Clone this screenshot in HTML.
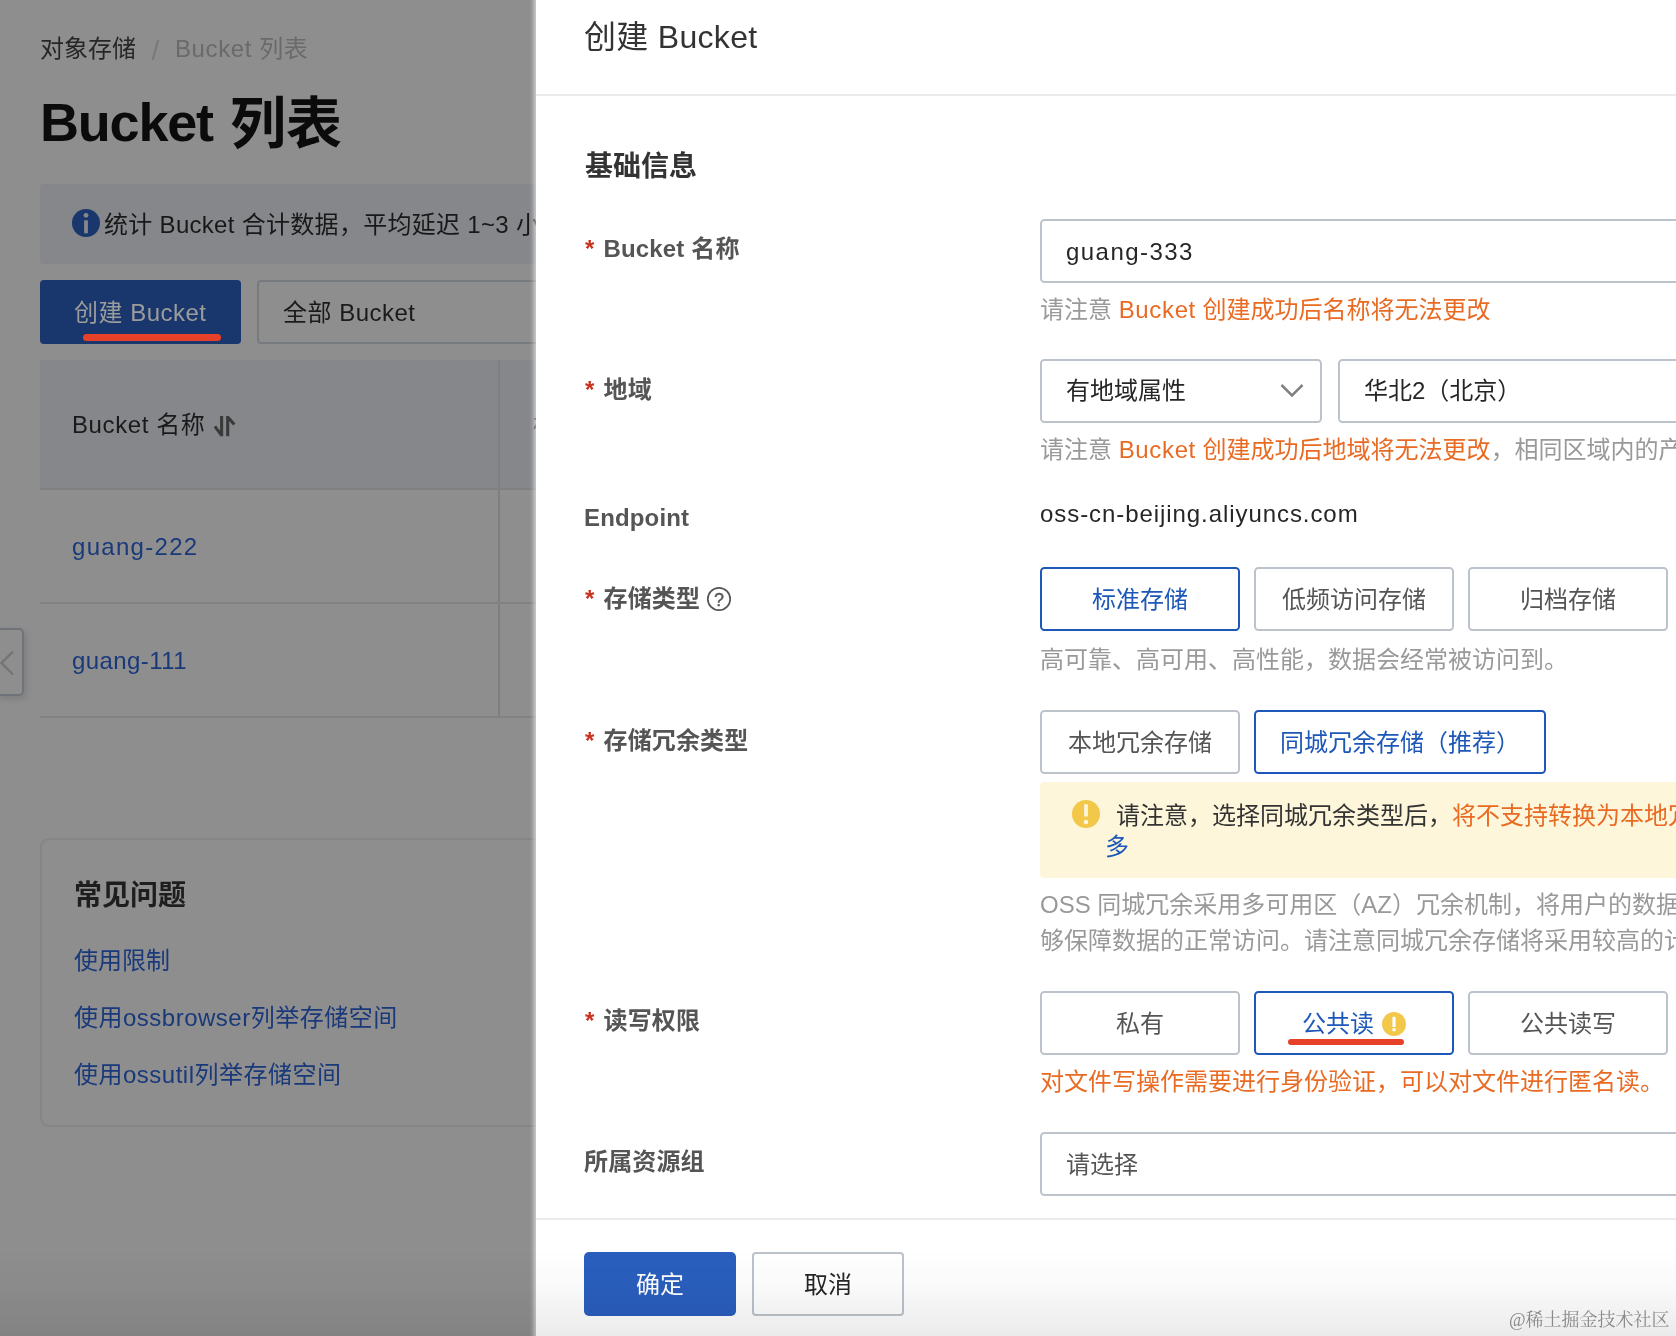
<!DOCTYPE html>
<html lang="zh-CN">
<head>
<meta charset="utf-8">
<title>创建 Bucket</title>
<style>
*{box-sizing:border-box;margin:0;padding:0}
html,body{width:1676px;height:1336px;overflow:hidden;background:#8e8e8e}
body{font-family:"Liberation Sans","Noto Sans CJK SC",sans-serif;font-size:24px;color:#1c1c1c;position:relative}
.abs{position:absolute;white-space:nowrap}
.t{position:absolute;white-space:nowrap;line-height:36px;height:36px}
/* left */
#left{position:absolute;left:0;top:0;width:536px;height:1336px;overflow:hidden;background:#8e8e8e}
#left .fade{position:absolute;left:0;top:1230px;width:536px;height:106px;background:linear-gradient(to bottom,rgba(0,0,0,0),rgba(0,0,0,.08))}
.link{color:#19397a}
/* panel */
#panel{position:absolute;left:536px;top:0;width:1140px;height:1336px;background:#fff;overflow:hidden;}
.lbl{font-weight:bold;color:#555;letter-spacing:.15px}
.req{color:#c8321e;font-weight:bold;margin-right:9px}
.box{position:absolute;border:2px solid #bcc3ca;border-radius:4.5px;background:#fff;height:64px;line-height:61px;white-space:nowrap;color:#555}
.box.c{text-align:center}
.box.sel{border-color:#1d57b9;color:#1d57b9}
.help{color:#999}
.or{color:#e96b23}
#left,#panel{will-change:transform}
</style>
</head>
<body>
<div id="left">
  <div class="t" style="left:40px;top:31px;color:#262626">对象存储</div>
  <div class="t" style="left:151.5px;top:32.5px;color:#797979;font-size:28px">/</div>
  <div class="t" style="left:175px;top:31px;color:#6a6a6a;letter-spacing:.6px">Bucket 列表</div>
  <div class="abs" id="h1" style="left:40px;top:82px;font-size:56px;line-height:80px;font-weight:bold;color:#0b0b0b"><span style="font-size:54px;letter-spacing:-1.2px">Bucket</span><span style="display:inline-block;width:17px"></span><span style="position:relative;top:1.5px">列表</span></div>

  <div class="abs" style="left:40px;top:184px;width:520px;height:80px;background:#85878b;border-radius:4px"></div>
  <svg class="abs" style="left:72px;top:209.4px" width="28" height="28" viewBox="0 0 28 28"><circle cx="14" cy="14" r="14" fill="#19376d"/><circle cx="14" cy="6.3" r="2.4" fill="#85878b"/><rect x="12.1" y="11.3" width="3.8" height="13" fill="#85878b"/></svg>
  <div class="t" style="left:104px;top:207px;color:#181818;letter-spacing:.3px">统计 Bucket 合计数据，平均延迟 1~3 小时</div>

  <div class="abs" style="left:40px;top:280px;width:201px;height:64px;background:#19376d;border-radius:4px"></div>
  <div class="t" style="left:74px;top:295px;color:#9c9c9c;letter-spacing:.5px">创建 Bucket</div>
  <div class="abs" style="left:83px;top:334px;width:138px;height:7px;border-radius:4px;background:#e8412a"></div>

  <div class="abs" style="left:257px;top:280px;width:400px;height:64px;border:2px solid #777b80;border-radius:4px"></div>
  <div class="t" style="left:283px;top:295px;color:#1a1a1a;letter-spacing:.5px">全部 Bucket</div>

  <div class="abs" style="left:40px;top:360px;width:520px;height:129px;background:#85878b"></div>
  <div class="abs" style="left:498px;top:360px;width:2px;height:358px;background:#7e7e7f"></div>
  <div class="abs" style="left:40px;top:488px;width:520px;height:2px;background:#808081"></div>
  <div class="abs" style="left:40px;top:602px;width:520px;height:2px;background:#818181"></div>
  <div class="abs" style="left:40px;top:716px;width:520px;height:2px;background:#818181"></div>
  <div class="t" style="left:72px;top:407px;color:#1a1a1a;letter-spacing:.6px">Bucket 名称</div>
  <svg class="abs" style="left:213px;top:414px" width="24" height="24" viewBox="0 0 24 24" fill="none" stroke="#3a3a3a" stroke-width="3.1"><path d="M8.6 2V22.2 M1.9 12.4L8.6 21.4"/><path d="M14.7 22.2V2 M14.7 3L21.3 10.6"/></svg>

  <div class="t" style="left:533px;top:407px;color:#1a1a1a">标签</div>
  <div class="t link" style="left:72px;top:529px;letter-spacing:1.3px">guang-222</div>
  <div class="t link" style="left:72px;top:643px;letter-spacing:.42px">guang-111</div>

  <div class="abs" style="left:-4px;top:628px;width:28px;height:68px;border:2px solid #6e7379;border-radius:5px;box-shadow:2px 3px 6px rgba(0,0,0,.12)"></div>
  <svg class="abs" style="left:0;top:648px" width="16" height="30" viewBox="0 0 16 30" fill="none" stroke="#747474" stroke-width="2.4"><path d="M13 3.5L1.5 15L13 26.5"/></svg>

  <div class="abs" style="left:40px;top:838px;width:560px;height:289px;border:2px solid #858585;border-radius:9px"></div>
  <div class="abs" style="left:74px;top:875px;font-size:28px;line-height:42px;font-weight:bold;color:#1e1e1e">常见问题</div>
  <div class="t link" style="left:74px;top:943px">使用限制</div>
  <div class="t link" style="left:74px;top:1000px;letter-spacing:.5px">使用ossbrowser列举存储空间</div>
  <div class="t link" style="left:74px;top:1057px;letter-spacing:.5px">使用ossutil列举存储空间</div>
  </div>

<div class="abs" style="left:529px;top:0;width:7px;height:1336px;z-index:5;background:linear-gradient(to right,rgba(255,255,255,0) 0,rgba(255,255,255,.07) 30%,rgba(255,255,255,.2) 55%,rgba(255,255,255,.38) 78%,rgba(255,255,255,.52) 100%)"></div>
<div id="panel">
  <div class="abs" style="left:48px;top:13px;font-size:32px;line-height:48px;color:#333;letter-spacing:.3px">创建 Bucket</div>
  <div class="abs" style="left:0;top:94px;width:1140px;height:2px;background:#ebebeb"></div>
  <div class="abs" style="left:49px;top:146px;font-size:28px;line-height:42px;font-weight:bold;color:#333">基础信息</div>
  <!-- Bucket name -->
  <div class="t lbl" style="left:49px;top:231px"><span class="req">*</span>Bucket 名称</div>
  <div class="box" style="left:504px;top:219px;width:700px;padding-left:24px;letter-spacing:1.45px;color:#262626">guang-333</div>
  <div class="t help" style="left:504px;top:292px">请注意 <span class="or"><span style="letter-spacing:.65px">Bucket</span> 创建成功后名称将无法更改</span></div>

  <!-- Region -->
  <div class="t lbl" style="left:49px;top:372px"><span class="req">*</span>地域</div>
  <div class="box" style="left:504px;top:359px;width:282px;padding-left:24px;line-height:59px;color:#262626">有地域属性</div>
  <svg class="abs" style="left:743px;top:380.7px" width="26" height="18" viewBox="0 0 26 18" fill="none" stroke="#808080" stroke-width="2.5"><path d="M2.5 4L13 14.5L23.5 4"/></svg>
  <div class="box" style="left:802px;top:359px;width:400px;padding-left:24px;line-height:59px;color:#262626">华北2（北京）</div>
  <div class="t help" style="left:504px;top:432px">请注意 <span class="or"><span style="letter-spacing:.65px">Bucket</span> 创建成功后地域将无法更改</span>，相同区域内的产品内网可以互通</div>

  <!-- Endpoint -->
  <div class="t lbl" style="left:48px;top:500px">Endpoint</div>
  <div class="t" style="left:504px;top:496px;color:#262626;letter-spacing:.93px">oss-cn-beijing.aliyuncs.com</div>

  <!-- Storage class -->
  <div class="t lbl" style="left:49px;top:581px"><span class="req">*</span>存储类型</div>
  <svg class="abs" style="left:170px;top:586px" width="26" height="26" viewBox="0 0 26 26" fill="none"><circle cx="13" cy="13" r="11.2" stroke="#555" stroke-width="1.7"/><text x="13" y="19.8" text-anchor="middle" font-family="Liberation Sans, sans-serif" font-size="18" fill="#555" stroke="#555" stroke-width=".35">?</text></svg>
  <div class="box c sel" style="left:504px;top:567px;width:200px">标准存储</div>
  <div class="box c" style="left:718px;top:567px;width:200px">低频访问存储</div>
  <div class="box c" style="left:932px;top:567px;width:200px">归档存储</div>
  <div class="t help" style="left:504px;top:641.5px">高可靠、高可用、高性能，数据会经常被访问到。</div>

  <!-- Redundancy -->
  <div class="t lbl" style="left:49px;top:723px"><span class="req">*</span>存储冗余类型</div>
  <div class="box c" style="left:504px;top:710px;width:200px">本地冗余存储</div>
  <div class="box c sel" style="left:718px;top:710px;width:292px">同城冗余存储（推荐）</div>
  <div class="abs" style="left:504px;top:782px;width:700px;height:96px;background:#fdf6da;border-radius:4px"></div>
  <svg class="abs" style="left:536px;top:799.5px" width="28" height="28" viewBox="0 0 28 28"><circle cx="14" cy="14" r="14" fill="#f2c74a"/><rect x="12.1" y="4.2" width="3.8" height="12.3" rx=".6" fill="#fdf6da"/><circle cx="14" cy="22" r="2.3" fill="#fdf6da"/></svg>
  <div class="t" style="left:580px;top:798px;color:#333">请注意，选择同城冗余类型后，<span class="or">将不支持转换为本地冗余存储。</span></div>
  <div class="t" style="left:569px;top:829px;color:#1d57b9">多</div>
  <div class="t help" style="left:504px;top:887px">OSS 同城冗余采用多可用区（AZ）冗余机制，将用户的数据分散存放在同一地域</div>
  <div class="t help" style="left:504px;top:923px">够保障数据的正常访问。请注意同城冗余存储将采用较高的计费标准</div>

  <!-- ACL -->
  <div class="t lbl" style="left:49px;top:1003px"><span class="req">*</span>读写权限</div>
  <div class="box c" style="left:504px;top:991px;width:200px">私有</div>
  <div class="box sel" style="left:718px;top:991px;width:200px;padding-left:46px">公共读</div>
  <svg class="abs" style="left:846px;top:1012px" width="24" height="24" viewBox="0 0 24 24"><circle cx="12" cy="12" r="12" fill="#f2c74a"/><rect x="10.4" y="4.8" width="3.2" height="10.2" rx=".6" fill="#fff"/><circle cx="12" cy="17.7" r="1.8" fill="#fff"/></svg>
  <div class="abs" style="left:752px;top:1038.6px;width:115.5px;height:6.6px;border-radius:4px;background:#e8412a"></div>
  <div class="box c" style="left:932px;top:991px;width:200px">公共读写</div>
  <div class="t or" style="left:504px;top:1064px">对文件写操作需要进行身份验证，可以对文件进行匿名读。</div>

  <!-- Resource group -->
  <div class="t lbl" style="left:48px;top:1144px">所属资源组</div>
  <div class="box" style="left:504px;top:1132px;width:700px;padding-left:24px;color:#555">请选择</div>

  <!-- footer -->
    <div class="abs" style="left:0;top:1218px;width:1140px;height:2px;background:#ebebeb"></div>
  <div class="abs" style="left:48px;top:1252px;width:152px;height:64px;background:#2a5fbe;border-radius:5px;color:#fff;text-align:center;line-height:66px">确定</div>
  <div class="abs" style="left:216px;top:1252px;width:152px;height:64px;border:2px solid #bcc3ca;border-radius:4px;color:#262626;text-align:center;line-height:62px;background:#fff">取消</div>
  <div class="abs" id="wm" style="left:973px;top:1306px;font-family:'Liberation Serif','Noto Serif CJK SC',serif;font-size:18px;line-height:28px;color:#939393">@稀土掘金技术社区</div>
</div>
<div class="abs" style="left:0;top:1250px;width:1676px;height:86px;z-index:9;background:linear-gradient(to bottom,rgba(0,0,0,0) 0,rgba(0,0,0,.02) 40%,rgba(0,0,0,.08) 100%);pointer-events:none"></div>
</body>
</html>
